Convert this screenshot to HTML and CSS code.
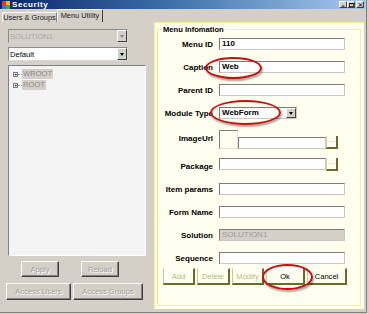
FILE: index.html
```html
<!DOCTYPE html>
<html lang="en">
<head>
    <meta charset="UTF-8">
    <title>Security</title>
    <link rel="stylesheet" href="styles.css">
</head>
<body>
    <div class="window">
        <div class="titlebar">
            <svg class="app-icon" width="8" height="8" viewBox="0 0 8 8">
                <rect x="0" y="0" width="4" height="4" fill="#e23a22"/>
                <rect x="4" y="0" width="4" height="4" fill="#f2c21a"/>
                <rect x="0" y="4" width="4" height="4" fill="#2a7de1"/>
                <rect x="4" y="4" width="4" height="4" fill="#3fae3f"/>
            </svg>
            <span class="title">Security</span>
            <div class="controls">
                <span class="ctl"><svg width="7" height="6" viewBox="0 0 7 6"><rect x="1" y="4" width="4" height="1.4" fill="#000"/></svg></span>
                <span class="ctl"><svg width="7" height="6" viewBox="0 0 7 6"><rect x="0.5" y="0.5" width="6" height="5" fill="none" stroke="#000"/><rect x="0.5" y="0.5" width="6" height="1.2" fill="#000"/></svg></span>
                <span class="ctl close"><svg width="7" height="6" viewBox="0 0 7 6"><path d="M1 0.5 L6 5.5 M6 0.5 L1 5.5" stroke="#000" stroke-width="1.3"/></svg></span>
            </div>
        </div>

        <div class="client">
            <div class="left">
                <div class="tabs">
                    <div class="tab">Users &amp; Groups</div>
                    <div class="tab selected">Menu Utility</div>
                </div>
                <div class="tabpage">
                    <div class="combo disabled">
                        <span class="combo-text">SOLUTION1</span>
                        <span class="drop"><i class="arrow"></i></span>
                    </div>
                    <div class="combo">
                        <span class="combo-text">Default</span>
                        <span class="drop"><i class="arrow"></i></span>
                    </div>
                    <div class="tree">
                        <div class="node first">
                            <span class="plus">+</span><span class="dots"></span><span class="node-text">WROOT</span>
                        </div>
                        <div class="node">
                            <span class="plus">+</span><span class="dots"></span><span class="node-text">ROOT</span>
                        </div>
                    </div>
                    <div class="btn-row">
                        <button class="win-btn apply" disabled>Apply</button>
                        <button class="win-btn reload" disabled>Reload</button>
                    </div>
                    <div class="btn-row second">
                        <button class="win-btn access-users" disabled>Access Users</button>
                        <button class="win-btn access-groups" disabled>Access Groups</button>
                    </div>
                </div>
            </div>

            <div class="menu-panel">
                <div class="group">
                    <span class="group-title">Menu Infomation</span>
                    <div class="form">
                        <label>Menu ID</label>
                        <div class="field">110</div>

                        <label>Caption</label>
                        <div class="field">Web</div>

                        <label>Parent ID</label>
                        <div class="field"></div>

                        <label>Module Type</label>
                        <div class="field select">WebForm<span class="drop"><i class="arrow"></i></span></div>

                        <label class="top">ImageUrl</label>
                        <div class="image-row">
                            <div class="image-box"></div>
                            <div class="field image-input"></div>
                            <span class="dots-btn">...</span>
                        </div>

                        <label>Package</label>
                        <div class="pick-row">
                            <div class="field package-input"></div>
                            <span class="dots-btn">...</span>
                        </div>

                        <label>Item params</label>
                        <div class="field"></div>

                        <label>Form Name</label>
                        <div class="field"></div>

                        <label>Solution</label>
                        <div class="field readonly">SOLUTION1</div>

                        <label>Sequence</label>
                        <div class="field"></div>
                    </div>
                    <div class="actions">
                        <button class="y-btn add off">Add</button>
                        <button class="y-btn delete off">Delete</button>
                        <button class="y-btn modify off">Modify</button>
                        <button class="y-btn ok">Ok</button>
                        <button class="y-btn cancel">Cancel</button>
                    </div>
                </div>
            </div>
        </div>

        <!-- red annotation marks -->
        <span class="mark mark-caption"></span>
        <span class="mark mark-module"></span>
        <span class="mark mark-ok"></span>
    </div>
</body>
</html>
```

FILE: styles.css
```css
/* window */
body {
    margin: 0;
    background: #d4d0c8;
    font-family: "Liberation Sans", Arial, sans-serif;
    font-size: 8px;
    color: #000;
}

.window {
    position: relative;
    width: 366px;
    height: 312px;
    background: #d4d0c8;
    border-right: 1px solid #808080;
    border-bottom: 1px solid #808080;
    overflow: hidden;
}

.titlebar {
    height: 9px;
    display: flex;
    align-items: center;
    background: linear-gradient(to right, #0a246a, #3a6ea5 45%, #a6caf0);
    padding-left: 2px;
}

.app-icon {
    display: block;
    margin-right: 2px;
}

.title {
    color: #fff;
    font-weight: bold;
    font-size: 8px;
    letter-spacing: 0.6px;
    line-height: 9px;
}

.controls {
    margin-left: auto;
    display: flex;
    margin-right: 2px;
}

.ctl {
    width: 8px;
    height: 7px;
    background: #d4d0c8;
    border-top: 1px solid #fff;
    border-left: 1px solid #fff;
    border-right: 1px solid #404040;
    border-bottom: 1px solid #404040;
    box-sizing: border-box;
    display: flex;
    align-items: center;
    justify-content: center;
}

.ctl svg {
    width: 5px;
    height: 4px;
}

.ctl.close {
    margin-left: 1px;
}

.client {
    display: flex;
}

/* left tab control */
.left {
    width: 154px;
}

.tabs {
    height: 13px;
    display: flex;
    align-items: flex-end;
    padding-left: 2px;
}

.tab {
    height: 10px;
    width: 55px;
    box-sizing: border-box;
    border-top: 1px solid #fff;
    border-left: 1px solid #fff;
    border-right: 1px solid #808080;
    font-size: 7.4px;
    line-height: 9px;
    text-align: center;
    color: #222;
    white-space: nowrap;
    overflow: hidden;
}

.tab.selected {
    height: 13px;
    width: 46px;
    border-right: 1px solid #404040;
    line-height: 11px;
}

.tabpage {
    padding: 7px 0 0 8px;
}

.combo {
    width: 120px;
    height: 14px;
    box-sizing: border-box;
    background: #fff;
    border: 1px solid #8c8c8c;
    border-right-color: #d8d8d8;
    border-bottom-color: #d8d8d8;
    display: flex;
    align-items: center;
    margin-bottom: 4px;
}

.combo.disabled {
    background: #d4d0c8;
    color: #a8a8a8;
}

.combo-text {
    flex: 1;
    padding-left: 1px;
    font-size: 7.6px;
}

.drop {
    width: 10px;
    height: 12px;
    box-sizing: border-box;
    background: #d4d0c8;
    border-top: 1px solid #fff;
    border-left: 1px solid #fff;
    border-right: 1px solid #404040;
    border-bottom: 1px solid #404040;
    display: flex;
    align-items: center;
    justify-content: center;
}

.arrow {
    width: 0;
    height: 0;
    border-left: 2.5px solid transparent;
    border-right: 2.5px solid transparent;
    border-top: 3px solid #000;
}

.combo.disabled .arrow {
    border-top-color: #888;
}

.tree {
    width: 138px;
    height: 191px;
    box-sizing: border-box;
    margin-top: 2px;
    background: #f4f4f4;
    border: 1px solid #808080;
    border-right-color: #fff;
    border-bottom-color: #fff;
    padding: 2px 0 0 4px;
}

.node {
    display: flex;
    align-items: center;
    height: 10px;
    margin-top: 1px;
}

.plus {
    width: 5px;
    height: 5px;
    box-sizing: border-box;
    border: 1px solid #808080;
    background: #fff;
    font-size: 6px;
    line-height: 3px;
    text-align: center;
    color: #000;
    overflow: hidden;
}

.dots {
    width: 4px;
    border-top: 1px dotted #9a9a9a;
}

.node-text {
    background: #d4d0c8;
    color: #8c8c8c;
    font-size: 7.6px;
    line-height: 10px;
    padding: 0 1px;
}

.btn-row {
    display: flex;
    margin-top: 5px;
}

.btn-row.second {
    margin-top: 6px;
    margin-left: -2px;
}

.win-btn {
    font-family: "Liberation Sans", Arial, sans-serif;
    font-size: 7.6px;
    height: 16px;
    padding: 0;
    background: #d4d0c8;
    border-top: 1px solid #fff;
    border-left: 1px solid #fff;
    border-right: 1px solid #404040;
    border-bottom: 1px solid #404040;
    box-shadow: inset -1px -1px 0 #808080;
    color: #a0a0a0;
    text-shadow: 1px 1px 0 #fff;
}

.apply {
    width: 38px;
    margin-left: 13px;
}

.reload {
    width: 38px;
    margin-left: 22px;
}

.access-users {
    width: 65px;
    height: 17px;
}

.access-groups {
    width: 70px;
    height: 17px;
    margin-left: 2px;
}

/* right yellow panel */
.menu-panel {
    margin-top: 13px;
    width: 210px;
    height: 287px;
    box-sizing: border-box;
    background: #fffff0;
    border-left: 1px solid #f4f48a;
    border-top: 1px solid #f4f48a;
    padding: 6px 3px 3px 2px;
}

.group {
    position: relative;
    height: 100%;
    box-sizing: border-box;
    border: 1px solid #f2f2a4;
    border-left: 1px solid #e9e96a;
    padding: 8px 0 0 0;
}

.group-title {
    position: absolute;
    top: -5px;
    left: 4px;
    background: #fffff0;
    font-weight: bold;
    font-size: 7.6px;
    padding: 0 1px;
    line-height: 9px;
}

.form {
    display: grid;
    grid-template-columns: 55px auto;
    grid-template-rows: 12px 12px 12px 12px 19px 12px 12px 12px 12px 12px;
    column-gap: 6px;
    row-gap: 11px;
    align-items: center;
}

.form label {
    text-align: right;
    font-weight: bold;
    font-size: 8px;
    white-space: nowrap;
}

.form label.top {
    align-self: start;
    margin-top: 4px;
}

.field {
    width: 126px;
    height: 12px;
    box-sizing: border-box;
    background: #fff;
    border: 1px solid #7a7a7a;
    border-right-color: #c8c8c8;
    border-bottom-color: #c8c8c8;
    font-weight: bold;
    font-size: 8px;
    line-height: 10px;
    padding-left: 2px;
}

.field.select {
    width: 78px;
    display: flex;
    justify-content: space-between;
    padding-right: 0;
}

.field.select .drop {
    height: 10px;
}

.field.readonly {
    background: #d4d0c8;
    color: #9a9a9a;
    font-weight: normal;
}

.image-row {
    display: flex;
    align-items: flex-end;
    height: 19px;
}

.image-box {
    width: 19px;
    height: 19px;
    box-sizing: border-box;
    background: #fffff0;
    border: 1px solid #808080;
    border-right-color: #e0e0d0;
    border-bottom-color: #e0e0d0;
}

.image-input {
    width: 88px;
}

.pick-row {
    display: flex;
    margin-top: -3px;
}

.package-input {
    width: 107px;
}

.dots-btn {
    width: 12px;
    height: 13px;
    box-sizing: border-box;
    background: #fffff0;
    border-left: 1px solid #d0d0a0;
    border-right: 2px solid #6b6b2f;
    border-bottom: 2px solid #6b6b2f;
    color: #a0a0a0;
    font-size: 7px;
    line-height: 8px;
    text-align: center;
}

.actions {
    display: flex;
    gap: 2px;
    margin-top: 4px;
    padding-left: 5px;
}

.y-btn {
    font-family: "Liberation Sans", Arial, sans-serif;
    font-size: 7.6px;
    height: 17px;
    padding: 0;
    background: #fffff0;
    border-top: 1px solid #fff;
    border-left: 1px solid #c8c890;
    border-right: 2px solid #6b6b2f;
    border-bottom: 2px solid #6b6b2f;
    color: #000;
}

.y-btn.off {
    color: #b8b884;
}

.add { width: 32px; }
.delete { width: 33px; }
.modify { width: 32px; }
.ok { width: 39px; }
.cancel { width: 40px; }

/* red annotation ellipses */
.mark {
    position: absolute;
    border: 2px solid #c41010;
    border-radius: 50%;
    box-shadow: 1px 2px 2px rgba(0, 0, 0, 0.35);
    box-sizing: border-box;
}

.mark-caption {
    left: 205px;
    top: 57px;
    width: 57px;
    height: 22px;
}

.mark-module {
    left: 210px;
    top: 100px;
    width: 71px;
    height: 25px;
}

.mark-ok {
    left: 262px;
    top: 264px;
    width: 51px;
    height: 26px;
}
```
